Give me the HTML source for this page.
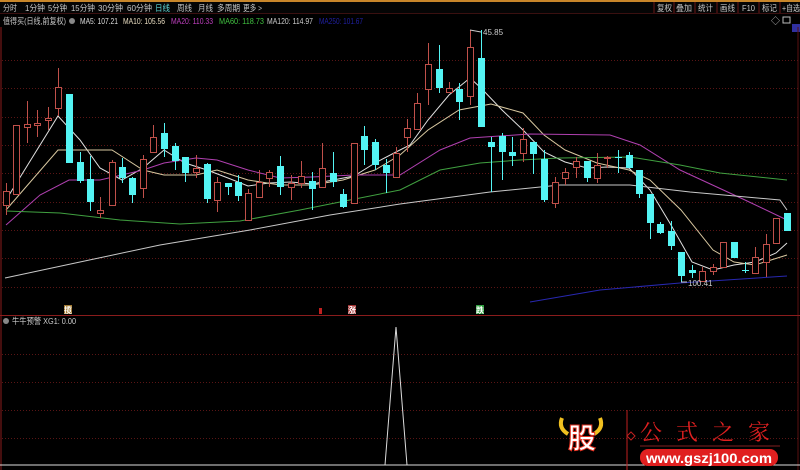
<!DOCTYPE html>
<html><head><meta charset="utf-8"><style>
body{margin:0;background:#000;width:800px;height:470px;overflow:hidden;font-family:"Liberation Sans","Noto Sans CJK SC",sans-serif;}
</style></head><body>
<svg id="s" width="800" height="470" xmlns="http://www.w3.org/2000/svg" style="position:absolute;left:0;top:0">
<rect width="800" height="470" fill="#000"/>
<rect x="0" y="0" width="800" height="2" fill="#c8862a"/>
<rect x="0" y="2" width="800" height="11" fill="#050505"/>
<line x1="0" y1="13.5" x2="800" y2="13.5" stroke="#3a1010"/>
<g font-size="8.5" fill="#c8c8c8" lengthAdjust="spacingAndGlyphs">
<text x="3" y="11" textLength="14" lengthAdjust="spacingAndGlyphs">分时</text>
<text x="25" y="11" textLength="20" lengthAdjust="spacingAndGlyphs">1分钟</text>
<text x="48" y="11" textLength="19" lengthAdjust="spacingAndGlyphs">5分钟</text>
<text x="71" y="11" textLength="24" lengthAdjust="spacingAndGlyphs">15分钟</text>
<text x="98" y="11" textLength="25" lengthAdjust="spacingAndGlyphs">30分钟</text>
<text x="127" y="11" textLength="25" lengthAdjust="spacingAndGlyphs">60分钟</text>
<text x="155" y="11" fill="#5fd8d8" textLength="15" lengthAdjust="spacingAndGlyphs">日线</text>
<text x="177" y="11" textLength="15" lengthAdjust="spacingAndGlyphs">周线</text>
<text x="198" y="11" textLength="15" lengthAdjust="spacingAndGlyphs">月线</text>
<text x="217" y="11" textLength="23" lengthAdjust="spacingAndGlyphs">多周期</text>
<text x="243" y="11" textLength="19" lengthAdjust="spacingAndGlyphs">更多 &gt;</text>
<text x="657" y="11" textLength="15" lengthAdjust="spacingAndGlyphs">复权</text>
<text x="676" y="11" textLength="16" lengthAdjust="spacingAndGlyphs">叠加</text>
<text x="698" y="11" textLength="15" lengthAdjust="spacingAndGlyphs">统计</text>
<text x="720" y="11" textLength="15" lengthAdjust="spacingAndGlyphs">画线</text>
<text x="742" y="11" textLength="13" lengthAdjust="spacingAndGlyphs">F10</text>
<text x="762" y="11" textLength="15" lengthAdjust="spacingAndGlyphs">标记</text>
<text x="782" y="11" textLength="18" lengthAdjust="spacingAndGlyphs">+自选</text>
</g>
<g stroke="#6a1818"><line x1="654" y1="2" x2="654" y2="13"/><line x1="674" y1="2" x2="674" y2="13"/><line x1="695" y1="2" x2="695" y2="13"/><line x1="717" y1="2" x2="717" y2="13"/><line x1="738" y1="2" x2="738" y2="13"/><line x1="759" y1="2" x2="759" y2="13"/><line x1="780" y1="2" x2="780" y2="13"/></g>
<g font-size="8.5">
<text x="3" y="24" fill="#c8c8c8" textLength="63" lengthAdjust="spacingAndGlyphs">值得买(日线,前复权)</text>
<circle cx="72" cy="21" r="3" fill="#888"/>
<text x="80" y="24" fill="#ddd" textLength="38" lengthAdjust="spacingAndGlyphs">MA5: 107.21</text>
<text x="123" y="24" fill="#e8dcc0" textLength="42" lengthAdjust="spacingAndGlyphs">MA10: 105.56</text>
<text x="171" y="24" fill="#c040c0" textLength="42" lengthAdjust="spacingAndGlyphs">MA20: 110.33</text>
<text x="219" y="24" fill="#40c040" textLength="45" lengthAdjust="spacingAndGlyphs">MA60: 118.73</text>
<text x="267" y="24" fill="#ccc" textLength="46" lengthAdjust="spacingAndGlyphs">MA120: 114.97</text>
<text x="319" y="24" fill="#2020a0" textLength="44" lengthAdjust="spacingAndGlyphs">MA250: 101.67</text>
</g>
<text x="771" y="24" font-size="9" fill="#bbb">◇</text><rect x="783" y="17" width="7" height="6" fill="none" stroke="#bbb"/>
<rect x="792" y="24" width="8" height="8" fill="#3030a0"/>
<line x1="1" y1="27" x2="1" y2="470" stroke="#8a1c1c"/>
<line x1="798" y1="27" x2="798" y2="470" stroke="#5a1010"/>
<g id="grid" stroke="#5a1515" stroke-dasharray="1,2"></g>
<g id="ma" fill="none" stroke-width="1"></g>
<g id="c"></g>
<line x1="0" y1="315.5" x2="800" y2="315.5" stroke="#8a1c1c"/>
<g font-size="8" font-weight="bold">
<rect x="64" y="305" width="8" height="9" fill="#a07830"/><text x="64" y="313" fill="#fff" textLength="8" lengthAdjust="spacingAndGlyphs">揽</text>
<rect x="319" y="308" width="3" height="6" fill="#c02020"/>
<rect x="348" y="305" width="8" height="9" fill="#a03030"/><text x="348" y="313" fill="#fff" textLength="8" lengthAdjust="spacingAndGlyphs">涨</text>
<rect x="476" y="305" width="8" height="9" fill="#30a040"/><text x="476" y="313" fill="#fff" textLength="8" lengthAdjust="spacingAndGlyphs">跌</text>
</g>
<circle cx="6" cy="321" r="3" fill="#888"/>
<text x="12" y="324" font-size="8.5" fill="#ccc" textLength="64" lengthAdjust="spacingAndGlyphs">牛牛预警 XG1: 0.00</text>
<line x1="0" y1="465" x2="800" y2="465" stroke="#ddd"/>
<polyline points="385,465 396,327 407,465" fill="none" stroke="#ddd"/>
<line x1="627" y1="410" x2="627" y2="470" stroke="#c02020"/>
<path d="M562 418 q-4 10 6 16 M600 418 q4 10 -6 16" stroke="#f0c020" stroke-width="4" fill="none"/>
<text x="568" y="448" font-size="28" font-weight="bold" fill="#fff" stroke="#e03020" stroke-width="1">股</text>
<path d="M627 436 l4 -4 4 4 -4 4z" fill="none" stroke="#c02020"/>
<text x="640" y="440" font-size="22" fill="#e02020" textLength="130" lengthAdjust="spacing" font-family="'Noto Serif CJK SC',serif">公式之家</text>
<line x1="640" y1="446" x2="780" y2="446" stroke="#802020"/>
<rect x="640" y="449" width="138" height="17" rx="8" fill="#e02020"/>
<text x="646" y="463" font-size="14" font-weight="bold" fill="#fff" textLength="126" lengthAdjust="spacingAndGlyphs">www.gszj100.com</text>
<text x="483" y="35" font-size="8" fill="#ccc">45.85</text>
<line x1="470" y1="30" x2="481" y2="32" stroke="#ccc"/>
<text x="688" y="286" font-size="8" fill="#ccc">100.41</text>
<line x1="681" y1="282" x2="687" y2="282" stroke="#ccc"/>
</svg>
<script>
const NS="http://www.w3.org/2000/svg";
function el(p,t,a){const e=document.createElementNS(NS,t);for(const k in a)e.setAttribute(k,a[k]);p.appendChild(e);return e;}
const g=document.getElementById('grid');
[60,88,117,145,173,202,230,258,287,354,382,410,438].forEach(y=>el(g,'line',{x1:2,x2:798,y1:y+.5,y2:y+.5}));
const C=[[6,'r',191,205,183,215],[16,'r',125,194,125,194],[27,'r',124,127,101,143],[37,'r',123,125,110,137],[48,'r',118,120,107,130],[58,'r',87,108,68,116],[69,'c',94,163,94,163],[80,'c',162,181,152,183],[90,'c',179,202,156,211],[100,'r',210,213,197,218],[112,'r',162,205,160,205],[122,'c',167,178,158,183],[132,'c',178,195,177,203],[143,'r',159,188,155,198],[153,'r',137,152,125,152],[164,'c',133,149,123,157],[175,'c',146,161,143,170],[185,'c',157,173,157,182],[196,'r',168,172,155,178],[207,'c',164,199,163,203],[217,'r',182,200,177,212],[228,'c',183,187,183,195],[238,'c',182,196,175,201],[248,'r',193,220,189,220],[259,'r',182,197,170,197],[269,'r',172,178,170,187],[280,'c',166,187,156,195],[291,'r',183,187,175,200],[301,'r',176,183,161,188],[312,'c',181,189,172,210],[322,'r',168,187,143,187],[333,'c',173,182,152,187],[343,'c',194,207,189,208],[354,'r',143,203,143,203],[364,'c',136,150,126,165],[375,'c',142,165,139,170],[386,'c',165,173,159,193],[396,'r',153,177,147,177],
[407,'r',128,137,119,152],[417,'r',103,129,93,130],[428,'r',64,89,43,105],[439,'c',69,88,45,93],[449,'r',88,92,82,93],[459,'c',89,102,83,120],[470,'r',47,96,30,105],[481,'c',58,127,30,127],[491,'c',142,147,137,192],[502,'c',136,152,133,180],[512,'c',152,156,137,166],[523,'r',139,153,128,162],[533,'c',142,154,142,174],[544,'c',159,200,150,202],[555,'r',182,203,177,208],[565,'r',172,178,168,185],[576,'r',161,167,157,178],[587,'c',161,178,161,182],[597,'r',165,178,153,183],[607,'r',157,158,156,168],[618,'c',157,158,150,173],[629,'c',155,168,152,168],[639,'c',170,194,170,198],[650,'c',194,223,194,239],[660,'c',224,233,222,234],[671,'c',231,246,221,250],[681,'c',252,276,252,282],[692,'c',270,273,265,278],[702,'r',271,281,267,281],[713,'r',267,271,264,275],[723,'r',242,267,242,267],[734,'c',242,258,242,258],[745,'c',270,271,262,273],[755,'r',257,273,247,273],[766,'r',244,262,234,277],[776,'r',218,243,218,243],[787,'c',213,231,213,231]];
const cg=document.getElementById('c');
C.forEach(([x,t,bt,bb,wt,wb])=>{const col=t=='c'?'#54f4f4':'#c0504a';
el(cg,'line',{x1:x+.5,x2:x+.5,y1:wt,y2:wb,stroke:col});
if(t=='c')el(cg,'rect',{x:x-3,y:bt,width:7,height:Math.max(bb-bt,1),fill:col});
else el(cg,'rect',{x:x-2.5,y:bt+.5,width:6,height:Math.max(bb-bt,1),fill:'#000',stroke:col});});
const M=[['#e0e0e0',"6,200 58,116 80,140 100,168 122,180 143,168 164,150 185,163 207,170 228,178 248,186 269,183 291,182 312,184 333,180 354,176 375,163 396,152 410,145 428,120 449,95 470,78 481,88 502,110 523,130 544,152 565,162 587,168 607,167 629,168 650,190 671,225 692,262 713,270 734,265 755,262 776,253 787,243"],
['#d8c8a0',"6,210 58,150 80,150 112,150 143,170 164,175 196,175 217,170 248,180 280,185 312,185 343,180 375,170 400,155 428,130 459,110 491,104 523,113 544,135 565,150 597,163 629,170 650,180 681,210 713,250 734,262 755,265 787,255"],
['#b040b0',"6,225 40,195 69,180 100,180 143,170 164,163 196,158 217,160 248,170 280,178 312,177 354,175 400,175 440,150 470,138 530,134 610,135 640,145 680,170 745,200 787,220"],
['#40a040',"6,211 60,213 120,220 180,224 240,221 300,210 360,198 400,190 440,170 480,163 520,160 560,158 630,157 680,165 720,173 787,180"],
['#c8c8c8',"5,278 80,262 160,245 250,230 330,215 400,204 490,192 560,185 630,185 690,192 780,200 787,210"],
['#2828b0',"530,302 600,290 680,283 787,276"]];
const mg=document.getElementById('ma');
M.forEach(([c,p])=>el(mg,'polyline',{points:p,stroke:c}));
</script>
</body></html>
